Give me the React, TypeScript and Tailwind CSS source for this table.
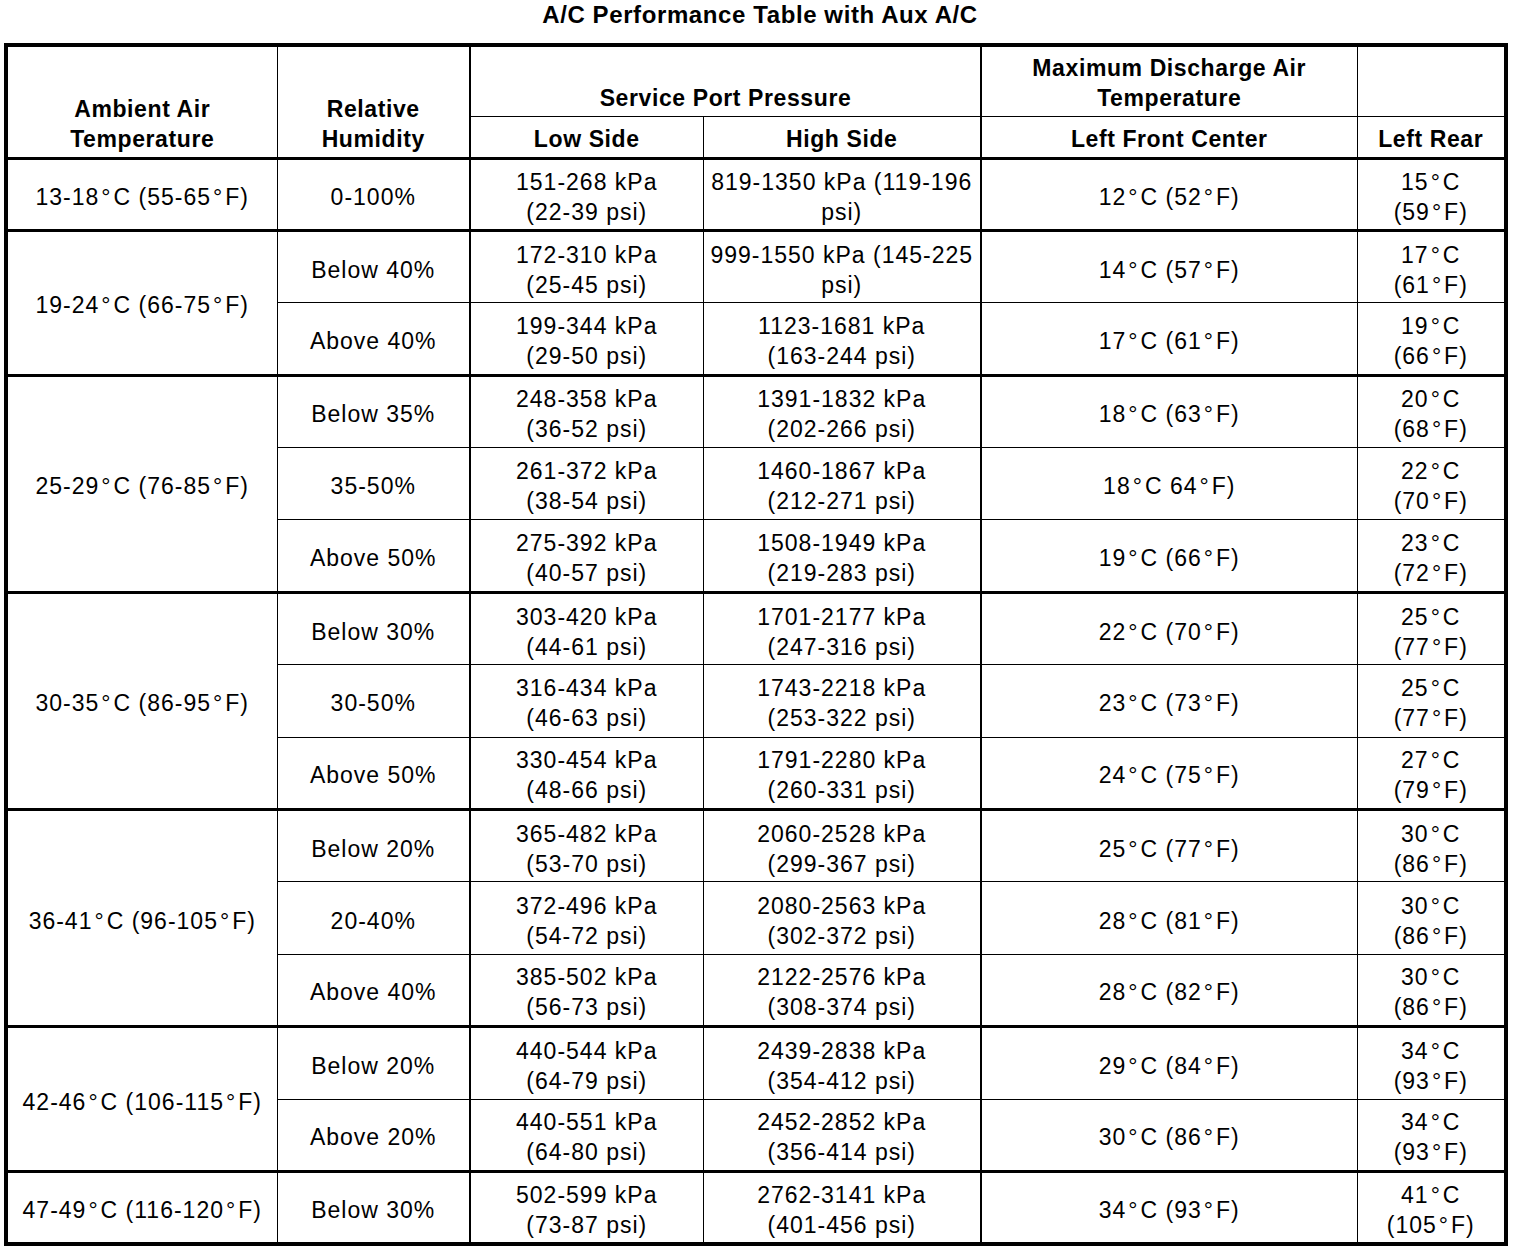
import React from "react";

type Row = {
  rh: string;
  low: [string, string];
  high: [string, string];
  lfc: string;
  lr: [string, string];
};

type Group = { amb: string; rows: Row[] };

const groups: Group[] = [
  {
    amb: "13-18°C (55-65°F)",
    rows: [
      { rh: "0-100%", low: ["151-268 kPa", "(22-39 psi)"], high: ["819-1350 kPa (119-196", "psi)"], lfc: "12°C (52°F)", lr: ["15°C", "(59°F)"] },
    ],
  },
  {
    amb: "19-24°C (66-75°F)",
    rows: [
      { rh: "Below 40%", low: ["172-310 kPa", "(25-45 psi)"], high: ["999-1550 kPa (145-225", "psi)"], lfc: "14°C (57°F)", lr: ["17°C", "(61°F)"] },
      { rh: "Above 40%", low: ["199-344 kPa", "(29-50 psi)"], high: ["1123-1681 kPa", "(163-244 psi)"], lfc: "17°C (61°F)", lr: ["19°C", "(66°F)"] },
    ],
  },
  {
    amb: "25-29°C (76-85°F)",
    rows: [
      { rh: "Below 35%", low: ["248-358 kPa", "(36-52 psi)"], high: ["1391-1832 kPa", "(202-266 psi)"], lfc: "18°C (63°F)", lr: ["20°C", "(68°F)"] },
      { rh: "35-50%", low: ["261-372 kPa", "(38-54 psi)"], high: ["1460-1867 kPa", "(212-271 psi)"], lfc: "18°C 64°F)", lr: ["22°C", "(70°F)"] },
      { rh: "Above 50%", low: ["275-392 kPa", "(40-57 psi)"], high: ["1508-1949 kPa", "(219-283 psi)"], lfc: "19°C (66°F)", lr: ["23°C", "(72°F)"] },
    ],
  },
  {
    amb: "30-35°C (86-95°F)",
    rows: [
      { rh: "Below 30%", low: ["303-420 kPa", "(44-61 psi)"], high: ["1701-2177 kPa", "(247-316 psi)"], lfc: "22°C (70°F)", lr: ["25°C", "(77°F)"] },
      { rh: "30-50%", low: ["316-434 kPa", "(46-63 psi)"], high: ["1743-2218 kPa", "(253-322 psi)"], lfc: "23°C (73°F)", lr: ["25°C", "(77°F)"] },
      { rh: "Above 50%", low: ["330-454 kPa", "(48-66 psi)"], high: ["1791-2280 kPa", "(260-331 psi)"], lfc: "24°C (75°F)", lr: ["27°C", "(79°F)"] },
    ],
  },
  {
    amb: "36-41°C (96-105°F)",
    rows: [
      { rh: "Below 20%", low: ["365-482 kPa", "(53-70 psi)"], high: ["2060-2528 kPa", "(299-367 psi)"], lfc: "25°C (77°F)", lr: ["30°C", "(86°F)"] },
      { rh: "20-40%", low: ["372-496 kPa", "(54-72 psi)"], high: ["2080-2563 kPa", "(302-372 psi)"], lfc: "28°C (81°F)", lr: ["30°C", "(86°F)"] },
      { rh: "Above 40%", low: ["385-502 kPa", "(56-73 psi)"], high: ["2122-2576 kPa", "(308-374 psi)"], lfc: "28°C (82°F)", lr: ["30°C", "(86°F)"] },
    ],
  },
  {
    amb: "42-46°C (106-115°F)",
    rows: [
      { rh: "Below 20%", low: ["440-544 kPa", "(64-79 psi)"], high: ["2439-2838 kPa", "(354-412 psi)"], lfc: "29°C (84°F)", lr: ["34°C", "(93°F)"] },
      { rh: "Above 20%", low: ["440-551 kPa", "(64-80 psi)"], high: ["2452-2852 kPa", "(356-414 psi)"], lfc: "30°C (86°F)", lr: ["34°C", "(93°F)"] },
    ],
  },
  {
    amb: "47-49°C (116-120°F)",
    rows: [
      { rh: "Below 30%", low: ["502-599 kPa", "(73-87 psi)"], high: ["2762-3141 kPa", "(401-456 psi)"], lfc: "34°C (93°F)", lr: ["41°C", "(105°F)"] },
    ],
  },
];

// the source spaces the degree sign out a little on both sides
function Deg({ text }: { text: string }) {
  const parts = text.split("°");
  return (
    <>
      {parts.map((p, i) => (
        <React.Fragment key={i}>
          {p}
          {i < parts.length - 1 && <span className="mx-[2px]">°</span>}
        </React.Fragment>
      ))}
    </>
  );
}

function Two({ lines }: { lines: [string, string] }) {
  return (
    <>
      <div className="whitespace-nowrap">
        <Deg text={lines[0]} />
      </div>
      <div className="whitespace-nowrap">
        <Deg text={lines[1]} />
      </div>
    </>
  );
}

const cell = "border border-black text-center align-middle px-1 pt-[5px] whitespace-nowrap";
const th = "border border-black text-center align-bottom px-1 pb-[3px] font-bold tracking-[0.6px]";

export default function App() {
  return (
    <div
      className="min-h-[1252px] w-[1520px] bg-white text-black text-[23px] leading-[30px] tracking-[1px]"
      style={{ fontFamily: '"Liberation Sans", Arial, Helvetica, sans-serif' }}
    >
      <div className="h-[43px] pt-[1px] text-center text-[24px] font-bold leading-[28px] tracking-[0.6px]">
        A/C Performance Table with Aux A/C
      </div>
      <table className="ml-[4px] table-fixed border-collapse border-4 border-black">
        <colgroup>
          <col className="w-[271px]" />
          <col className="w-[193px]" />
          <col className="w-[233px]" />
          <col className="w-[278px]" />
          <col className="w-[376px]" />
          <col className="w-[149px]" />
        </colgroup>
        <thead>
          <tr className="h-[71px]">
            <th rowSpan={2} className={`${th} border-b-[3px]`}>
              Ambient Air
              <br />
              Temperature
            </th>
            <th rowSpan={2} className={`${th} border-b-[3px] border-r-2`}>
              Relative
              <br />
              Humidity
            </th>
            <th colSpan={2} className={`${th} border-r-2`}>
              Service Port Pressure
            </th>
            <th className={th}>
              Maximum Discharge Air
              <br />
              Temperature
            </th>
            <th className={th}></th>
          </tr>
          <tr className="h-[42px]">
            <th className={`${th} border-b-[3px]`}>Low Side</th>
            <th className={`${th} border-b-[3px] border-r-2`}>High Side</th>
            <th className={`${th} border-b-[3px]`}>Left Front Center</th>
            <th className={`${th} border-b-[3px]`}>Left Rear</th>
          </tr>
        </thead>
        <tbody>
          {groups.map((g) =>
            g.rows.map((r, i) => {
              const top = i === 0 ? "border-t-[3px]" : "";
              return (
                <tr key={g.amb + r.rh} className="h-[72.4px]">
                  {i === 0 && (
                    <td rowSpan={g.rows.length} className={`${cell} ${top}`}>
                      <Deg text={g.amb} />
                    </td>
                  )}
                  <td className={`${cell} ${top} border-r-2`}>{r.rh}</td>
                  <td className={`${cell} ${top}`}>
                    <Two lines={r.low} />
                  </td>
                  <td className={`${cell} ${top} border-r-2`}>
                    <Two lines={r.high} />
                  </td>
                  <td className={`${cell} ${top}`}>
                    <Deg text={r.lfc} />
                  </td>
                  <td className={`${cell} ${top}`}>
                    <Two lines={r.lr} />
                  </td>
                </tr>
              );
            })
          )}
        </tbody>
      </table>
    </div>
  );
}
